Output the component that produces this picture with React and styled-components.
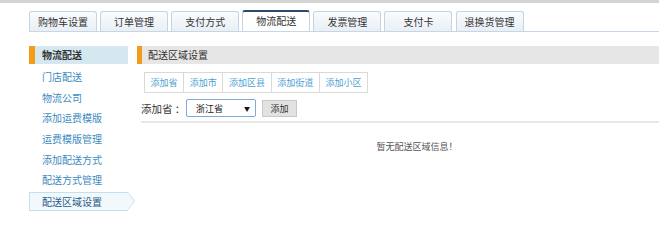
import React from 'react';
import styled, { createGlobalStyle } from 'styled-components';

const GlobalStyle = createGlobalStyle`
  html, body {
    margin: 0;
    padding: 0;
    background: #fff;
    font-family: "Noto Sans CJK SC", "Liberation Sans", sans-serif;
    color: #333;
  }
`;

const TopBar = styled.div`
  height: 3px;
  background: #d4d4d4;
`;

const TabBar = styled.div`
  display: flex;
  gap: 3.1px;
  margin: 7px 0 0 29px;
  border-bottom: 1px solid #c6d6e6;
`;

const Tab = styled.div`
  width: 68px;
  height: ${p => (p.$active ? '19px' : '20px')};
  box-sizing: border-box;
  border: 1px solid #c4d4e4;
  border-bottom: none;
  border-top: ${p => (p.$active ? '2px solid #2c4a6b' : '1px solid #c4d4e4')};
  border-radius: 3px 3px 0 0;
  background: ${p =>
    p.$active ? '#fff' : 'linear-gradient(#fafcfe, #e9eff5)'};
  font-size: 10px;
  line-height: ${p => (p.$active ? '18px' : '19px')};
  text-align: center;
  color: #333;
  margin-top: ${p => (p.$active ? '0' : '1px')};
  ${p => p.$active && 'height: 21px; margin-bottom: -1px;'}
`;

const Body = styled.div`
  display: flex;
  gap: 9px;
  margin: 14px 0 0 29px;
`;

const Sidebar = styled.div`
  width: 99px;
  flex-shrink: 0;
`;

const SideHead = styled.div`
  height: 18px;
  line-height: 18px;
  background: #d5e8f0;
  border-left: 6px solid #f59b1c;
  padding-left: 7px;
  font-size: 10px;
  font-weight: bold;
  color: #333;
  margin-bottom: 3px;
`;

const SideItem = styled.div`
  position: relative;
  height: ${p => (p.$active ? '19px' : '20.7px')};
  line-height: ${p => (p.$active ? '18px' : '20.7px')};
  font-size: 10px;
  padding-left: 13px;
  color: ${p => (p.$active ? '#2b5b86' : '#3d8ac0')};
  ${p =>
    p.$active &&
    `
    margin-top: 1px;
    box-sizing: border-box;
    border: 1px solid #c2e0ef;
    border-right: none;
    background: #f1f9fd;
    padding-left: 12px;
    &::before, &::after {
      content: '';
      position: absolute;
      top: -1px;
      width: 0;
      height: 0;
      border-top: 9.5px solid transparent;
      border-bottom: 9.5px solid transparent;
    }
    &::before {
      right: -7px;
      border-left: 7px solid #c2e0ef;
    }
    &::after {
      right: -6px;
      border-left: 6px solid #f1f9fd;
      top: 0;
      border-top-width: 8.5px;
      border-bottom-width: 8.5px;
    }
  `}
`;

const Main = styled.div`
  flex: 1;
  min-width: 0;
`;

const MainHead = styled.div`
  height: 18px;
  line-height: 18px;
  background: #e6e6e6;
  border-left: 5px solid #f59b1c;
  padding-left: 6px;
  font-size: 10px;
  color: #333;
`;

const Content = styled.div`
  padding-left: 4px;
`;

const SubTabs = styled.div`
  display: flex;
  margin: 8px 0 0 3px;
`;

const SubTab = styled.div`
  height: 21px;
  box-sizing: border-box;
  line-height: 19px;
  padding: 0 5.6px;
  border: 1px solid #d9d9d9;
  margin-left: -1px;
  font-size: 9px;
  color: #4f9fd3;
  background: #fff;
  &:first-child {
    margin-left: 0;
  }
`;

const FormRow = styled.div`
  display: flex;
  align-items: center;
  height: 18px;
  margin-top: 6px;
  padding-bottom: 4px;
  border-bottom: 2px solid #e8e8e8;
`;

const Label = styled.span`
  font-size: 10.5px;
  color: #333;
  width: 45px;
`;

const Select = styled.div`
  width: 70px;
  height: 18px;
  box-sizing: border-box;
  border: 1px solid #7ea9dc;
  border-radius: 2px;
  background: #fff;
  display: flex;
  align-items: center;
  justify-content: space-between;
  padding: 0 5px 0 9px;
  font-size: 9px;
  color: #222;
`;

const Caret = styled.span`
  font-size: 6px;
  color: #111;
`;

const Button = styled.div`
  margin-left: 6px;
  width: 35px;
  height: 17px;
  box-sizing: border-box;
  border: 1px solid #c8c8c8;
  background: #e2e2e2;
  font-size: 9px;
  line-height: 15px;
  text-align: center;
  color: #333;
`;

const Empty = styled.div`
  margin-top: 17px;
  padding-left: 34px;
  text-align: center;
  font-size: 9px;
  color: #555;
`;

const tabs = ['购物车设置', '订单管理', '支付方式', '物流配送', '发票管理', '支付卡', '退换货管理'];
const sideItems = ['门店配送', '物流公司', '添加运费模版', '运费模版管理', '添加配送方式', '配送方式管理', '配送区域设置'];
const subTabs = ['添加省', '添加市', '添加区县', '添加街道', '添加小区'];

export default function App() {
  return (
    <>
      <GlobalStyle />
      <TopBar />
      <TabBar>
        {tabs.map(t => (
          <Tab key={t} $active={t === '物流配送'}>{t}</Tab>
        ))}
      </TabBar>
      <Body>
        <Sidebar>
          <SideHead>物流配送</SideHead>
          {sideItems.map(s => (
            <SideItem key={s} $active={s === '配送区域设置'}>{s}</SideItem>
          ))}
        </Sidebar>
        <Main>
          <MainHead>配送区域设置</MainHead>
          <Content>
            <SubTabs>
              {subTabs.map(s => (
                <SubTab key={s}>{s}</SubTab>
              ))}
            </SubTabs>
            <FormRow>
              <Label>添加省 ：</Label>
              <Select>
                <span>浙江省</span>
                <Caret>▼</Caret>
              </Select>
              <Button>添加</Button>
            </FormRow>
            <Empty>暂无配送区域信息！</Empty>
          </Content>
        </Main>
      </Body>
    </>
  );
}
